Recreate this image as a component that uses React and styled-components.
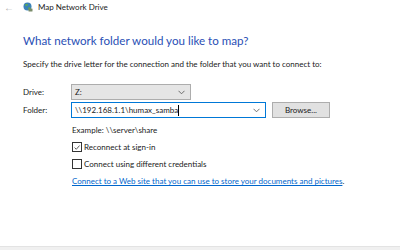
import React from 'react'
import styled, { createGlobalStyle } from 'styled-components'

const Global = createGlobalStyle`
  html, body {
    margin: 0;
    padding: 0;
    background: #fff;
  }
  body {
    font-family: Lato, "Noto Sans", sans-serif;
    font-size: 8px;
    color: #1a1a1a;
  }
`

function Chevron() {
  return (
    <svg width="7" height="5" viewBox="0 0 7 5">
      <path d="M0.5 0.8 L3.5 3.8 L6.5 0.8" fill="none" stroke="#606060" strokeWidth="0.9" />
    </svg>
  )
}

function DriveIcon() {
  return (
    <svg width="10" height="10" viewBox="0 0 10 10">
      <circle cx="4.5" cy="4.5" r="4" fill="#3b82b8" />
      <path d="M2 2.5 Q3.5 1.5 5 2.5 Q4.5 4 3 4.2 Z" fill="#5fb04a" />
      <path d="M5.5 5.5 Q7 5 7.8 6 Q6.5 7.8 5 7.5 Z" fill="#5fb04a" />
      <rect x="5.5" y="6.5" width="4" height="3" rx="0.5" fill="#7a8c6a" />
    </svg>
  )
}

function App() {
  return (
    <>
      <Global />
      <Window>
        <TitleBar>
          <Back>←</Back>
          <DriveIcon />
          <TitleText>Map Network Drive</TitleText>
        </TitleBar>
        <Content>
          <Heading>What network folder would you like to map?</Heading>
          <Intro>Specify the drive letter for the connection and the folder that you want to connect to:</Intro>
          <Form>
            <Label>Drive:</Label>
            <Select width={120} $grey>
              <span>Z:</span>
              <Chevron />
            </Select>
            <Label>Folder:</Label>
            <FolderRow>
              <Select width={195} $focused>
                <span>\\192.168.1.1\humax_samba<Caret /></span>
                <Chevron />
              </Select>
              <Button>Browse...</Button>
            </FolderRow>
          </Form>
          <Options>
            <Example>Example: \\server\share</Example>
            <Check>
              <Box>
                <svg width="9" height="9" viewBox="0 0 9 9">
                  <path d="M1.8 4.6 L3.7 6.5 L7.4 2.3" fill="none" stroke="#333" strokeWidth="0.9" />
                </svg>
              </Box>
              Reconnect at sign-in
            </Check>
            <Check>
              <Box />
              Connect using different credentials
            </Check>
            <LinkLine>
              <Link href="#">Connect to a Web site that you can use to store your documents and pictures</Link>.
            </LinkLine>
          </Options>
        </Content>
        <Footer />
      </Window>
    </>
  )
}

export default App

const Window = styled.div`
  width: 400px;
  height: 250px;
  display: flex;
  flex-direction: column;
  background: #fff;
  overflow: hidden;
`

const TitleBar = styled.div`
  height: 14px;
  display: flex;
  align-items: center;
  padding-left: 4px;
  svg { margin-right: 5px; }
`

const Back = styled.span`
  width: 19px;
  color: #b0b0b0;
  font-family: "Noto Sans", sans-serif;
  font-size: 10px;
  line-height: 1;
`

const TitleText = styled.span`
  font-size: 8px;
  color: #222;
`

const Content = styled.div`
  flex: 1;
  padding: 20px 0 0 23px;
  display: flex;
  flex-direction: column;
`

const Heading = styled.div`
  font-size: 11.6px;
  color: #2a4fb5;
  line-height: 14px;
`

const Intro = styled.div`
  margin-top: 10px;
  line-height: 12px;
`

const Form = styled.div`
  margin-top: 14px;
  display: grid;
  grid-template-columns: 48px auto;
  row-gap: 2px;
  align-items: center;
`

const Label = styled.div`
  line-height: 16px;
`

const FolderRow = styled.div`
  display: flex;
  gap: 6px;
`

const Select = styled.div`
  box-sizing: border-box;
  width: ${p => p.width}px;
  height: 16px;
  display: flex;
  align-items: center;
  justify-content: space-between;
  padding: 0 5px 0 3px;
  background: ${p => (p.$grey ? '#e5e5e5' : '#fff')};
  border: 1px solid ${p => (p.$focused ? '#0078d7' : '#adadad')};
  span { display: flex; align-items: center; }
`

const Caret = styled.i`
  display: inline-block;
  width: 1px;
  height: 11px;
  background: #000;
`

const Button = styled.div`
  box-sizing: border-box;
  width: 58px;
  height: 16px;
  display: flex;
  align-items: center;
  justify-content: center;
  background: #e1e1e1;
  border: 1px solid #adadad;
`

const Options = styled.div`
  margin: 6px 0 0 49px;
  display: flex;
  flex-direction: column;
  gap: 5px;
`

const Example = styled.div`
  line-height: 12px;
`

const Check = styled.div`
  display: flex;
  align-items: center;
  gap: 2px;
  height: 12px;
`

const Box = styled.div`
  box-sizing: border-box;
  width: 10px;
  height: 10px;
  border: 1px solid #333;
  display: flex;
  align-items: center;
  justify-content: center;
  svg { display: block; }
`

const LinkLine = styled.div`
  line-height: 12px;
`

const Link = styled.a`
  color: #0066cc;
  text-decoration: underline;
`

const Footer = styled.div`
  height: 3px;
  background: #f0f0f0;
  border-top: 1px solid #e3e3e3;
`
